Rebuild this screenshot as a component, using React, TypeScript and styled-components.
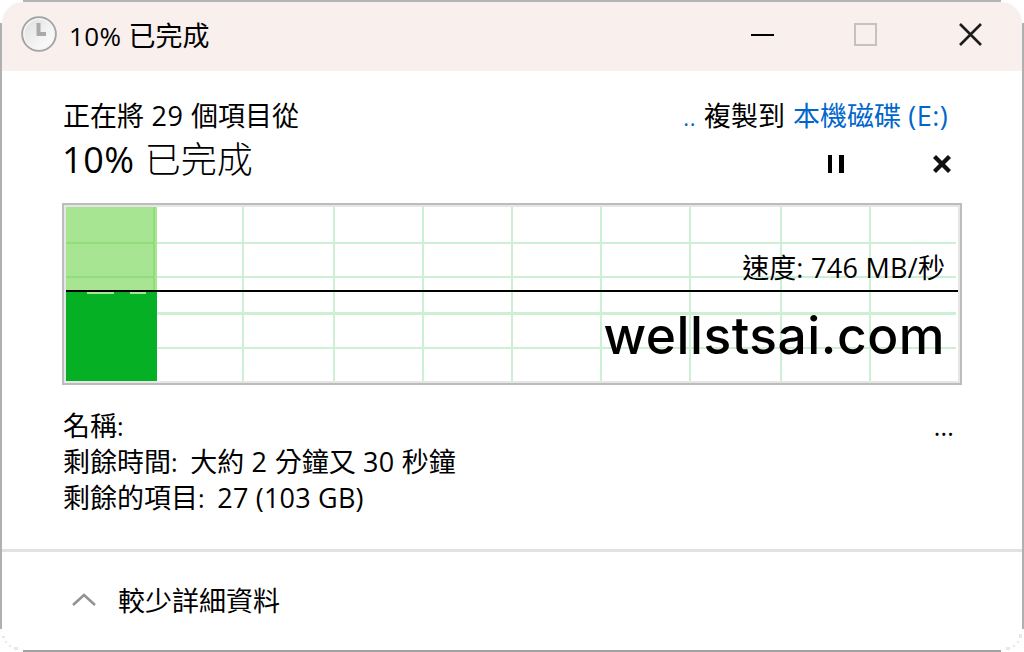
import React from "react";
import styled, { createGlobalStyle } from "styled-components";

const GlobalStyle = createGlobalStyle`
  * { box-sizing: border-box; }
  body { margin: 0; background: #fff; }
`;

const Window = styled.main`
  position: relative;
  width: 1024px;
  height: 652px;
  padding: 2px;
  display: flex;
  flex-direction: column;
  overflow: hidden;
  background: #fff;
  color: #000;
  font-family: "Open Sans", "Noto Sans CJK TC", sans-serif;
  font-size: 27px;
  white-space: pre;
`;

const Outline = styled.svg`
  position: absolute;
  inset: 0;
`;

const TitleBar = styled.header`
  flex: none;
  height: 69px;
  padding: 0 40px 4px 19px;
  display: flex;
  align-items: center;
  border-radius: 21px 21px 0 0;
  background: #f9f0ee;
`;

const Title = styled.h1`
  flex: 1;
  margin: 2px 0 0 11px;
  font-size: 27px;
  line-height: 40px;
  font-weight: 400;
`;

const WindowButtons = styled.div`
  display: flex;
  align-items: center;
  gap: 80px;
`;

const IconButton = styled.button<{ $gap?: number }>`
  display: flex;
  margin: 0 0 0 ${(p) => p.$gap ?? 0}px;
  padding: 0;
  border: 0;
  background: none;
`;

const Latin = styled.span<{ $size?: number; $spacing?: number }>`
  font-size: ${(p) => p.$size ?? 27}px;
  font-weight: 400;
  letter-spacing: ${(p) => p.$spacing ?? 0.2}px;
`;

const Content = styled.section`
  flex: none;
  height: 478px;
  padding: 27px 60px 0 61px;
  display: flex;
  flex-direction: column;
`;

const Row = styled.div<{ $height: number; $right?: number }>`
  flex: none;
  display: flex;
  justify-content: space-between;
  align-items: center;
  height: ${(p) => p.$height}px;
  line-height: ${(p) => p.$height}px;
  padding-right: ${(p) => p.$right ?? 0}px;
`;

const Link = styled.a`
  color: #0066cc;
`;

const Heading = styled.h2`
  margin: 2px 0 0 -1px;
  font-size: 36px;
  font-weight: 300;
  line-height: inherit;
`;

const Actions = styled.div`
  display: flex;
  align-items: center;
  gap: 89px;
  padding-top: 10px;
`;

const ChartFrame = styled.div`
  position: relative;
  flex: none;
  width: 900px;
  height: 182px;
  margin: 19px 0 23px -1px;
  border: 2px solid #bcbcbc;
  padding: 2px;
  background: #e6e6e6;
`;

const Plot = styled.svg`
  display: block;
`;

const Speed = styled.div`
  position: absolute;
  right: 15px;
  top: 43px;
  line-height: 40px;
`;

const Watermark = styled.div`
  position: absolute;
  right: 15px;
  top: 100px;
  line-height: 60px;
  font-family: Inter, sans-serif;
  font-weight: 500;
  font-size: 51.5px;
  letter-spacing: 0.5px;
`;

const Footer = styled.footer`
  flex: 1;
  border-top: 3px solid #e2e2e2;
  padding: 0 0 3px 70px;
  display: flex;
  align-items: center;
  gap: 22px;
`;

const verticals = [176, 267, 356, 445, 534, 623, 714, 803];
const horizontals = [[35, 2], [69, 2], [105, 3], [140, 2]];

function Clock() {
  return (
    <svg width="37" height="37" viewBox="0 0 37 37">
      <defs>
        <linearGradient id="face" x1="0" y1="0" x2="1" y2="1">
          <stop offset="0" stopColor="#dcdcdc" />
          <stop offset="0.6" stopColor="#f4f4f4" />
          <stop offset="1" stopColor="#fff" />
        </linearGradient>
      </defs>
      <circle cx="18" cy="18" r="16.8" fill="url(#face)" stroke="#a4a4a4" strokeWidth="2" />
      <circle cx="18" cy="18" r="15" fill="none" stroke="#f4f4f4" strokeWidth="1.5" />
      <path d="M17.500 7v11h7.500" fill="none" stroke="#aaa" strokeWidth="4" />
    </svg>
  );
}

function SpeedChart() {
  return (
    <Plot width="892" height="174" viewBox="0 0 892 174" shapeRendering="crispEdges">
      <rect width="892" height="174" fill="#fff" />
      {horizontals.map(([y, h]) => (
        <rect key={y} x="0" y={y} width="890" height={h} fill="#ccf0d4" />
      ))}
      {verticals.map((x) => (
        <rect key={x} x={x} y="0" width="2" height="174" fill="#ccf0d4" />
      ))}
      <rect width="91" height="85" fill="#a8e592" />
      <path d="M0 35h87v2H0zM0 69h87v2H0zM87 0h2v84h-2z" fill="#91dd7e" />
      <rect y="84" width="91" height="90" fill="#06b025" />
      <path d="M21 85h27v2H21zM64 85h16v2H64z" fill="#a8e592" />
      <rect y="83" width="892" height="2" fill="#000" />
    </Plot>
  );
}

export default function App() {
  return (
    <>
      <GlobalStyle />
      <Window>
        <Outline width="1024" height="652" viewBox="0 0 1024 652" shapeRendering="crispEdges">
          <rect x="23" width="978" height="2" fill="#b4b4b4" />
          <rect y="23" width="2" height="606" fill="#b0b0b0" />
          <rect x="1022" y="23" width="2" height="606" fill="#b0b0b0" />
          <rect x="23" y="650" width="978" height="2" fill="#a0a0a0" />
          <path d="M2 636h3v2H2zM5 641h2v2H5zM9 645h2v2H9zM14 647h4v3h-4zM1019 634h3v4h-3zM1017 641h2v2h-2zM1013 645h2v2h-2zM1006 647h4v3h-4z" fill="#e8e8e8" />
        </Outline>
        <TitleBar>
          <Clock />
          <Title><Latin $size={26} $spacing={0.4}>10% </Latin>已完成</Title>
          <WindowButtons>
            <IconButton aria-label="最小化">
              <svg width="23" height="24"><path d="M0 11h23v2H0z" fill="#000" /></svg>
            </IconButton>
            <IconButton aria-label="最大化">
              <svg width="23" height="24"><rect x="1" y="1" width="21" height="21" fill="none" stroke="#c5c1bf" strokeWidth="2" /></svg>
            </IconButton>
            <IconButton aria-label="關閉" $gap={2}>
              <svg width="23" height="24"><path d="M1 1L22 22M22 1L1 22" stroke="#1c1c1c" strokeWidth="2.6" /></svg>
            </IconButton>
          </WindowButtons>
        </TitleBar>
        <Content>
          <Row $height={36} $right={14}>
            <span>正在將<Latin $spacing={0.5}> 29 </Latin>個項目從</span>
            <span><Link><Latin $size={22} $spacing={0.8}>..</Latin></Link><Latin $spacing={0.5}> </Latin>複製到<Latin $spacing={1}> </Latin><Link>本機磁碟<Latin $spacing={0.4}> (E:)</Latin></Link></span>
          </Row>
          <Row $height={50} $right={11}>
            <Heading><Latin $size={36} $spacing={0.6}>10% </Latin>已完成</Heading>
            <Actions>
              <IconButton aria-label="暫停">
                <svg width="16" height="18"><path d="M0 0h4v18H0zM11 0h5v18h-5z" fill="#000" /></svg>
              </IconButton>
              <IconButton aria-label="取消">
                <svg width="18" height="18"><path d="M1.5 1.5L16.500 16.500M16.500 1.500L1.500 16.500" stroke="#111" strokeWidth="4.300" /></svg>
              </IconButton>
            </Actions>
          </Row>
          <ChartFrame>
            <SpeedChart />
            <Speed>速度<Latin $spacing={0.3}>: 746 MB/</Latin>秒</Speed>
            <Watermark>wellstsai.com</Watermark>
          </ChartFrame>
          <Row $height={36} $right={8}><span>名稱<Latin $size={25}>:</Latin></span><Latin $size={25}>...</Latin></Row>
          <Row $height={36}><span>剩餘時間<Latin $size={25} $spacing={-0.1}>:  </Latin>大約<Latin $spacing={0.3}> 2 </Latin>分鐘又<Latin $spacing={0.3}> 30 </Latin>秒鐘</span></Row>
          <Row $height={36}><span>剩餘的項目<Latin $size={25} $spacing={-0.1}>:  </Latin><Latin>27 (103 GB)</Latin></span></Row>
        </Content>
        <Footer>
          <svg width="24" height="14"><path d="M1 12L12 2L23 12" fill="none" stroke="#929292" strokeWidth="2.500" /></svg>
          <span>較少詳細資料</span>
        </Footer>
      </Window>
    </>
  );
}
